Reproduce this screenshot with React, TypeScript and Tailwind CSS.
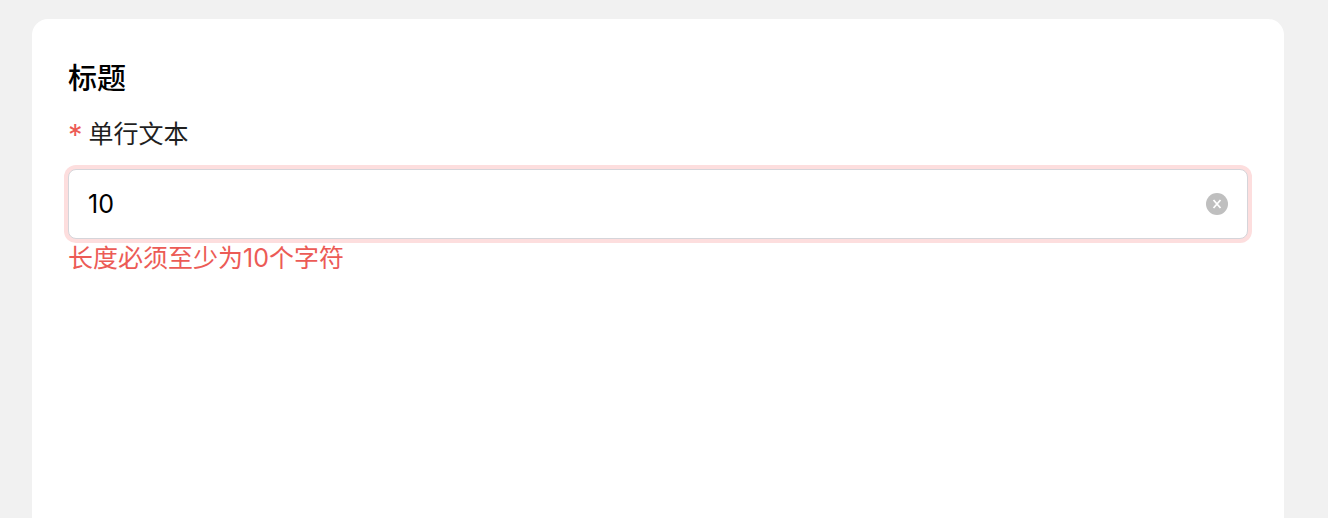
import React, { useState } from 'react';

const MIN_LENGTH = 10;

export default function App() {
  const [value, setValue] = useState('10');

  const invalid = value.length < MIN_LENGTH;

  return (
    <div className="flex min-h-screen flex-col bg-[#f1f1f1] pt-[19px] pr-11 pl-8 font-[Inter,'Noto_Sans_CJK_SC',sans-serif]">
      <main className="flex-1 rounded-t-2xl bg-white px-9 pt-10">
        <h1 className="text-[29px] leading-10 font-medium text-black">标题</h1>

        <div className="mt-3">
          <label htmlFor="single-line" className="flex gap-1.5 text-[25px] leading-[46px] text-[#1f1f1f]">
            <span className="text-[29px] leading-[48px] text-[#ec5b56]" aria-hidden="true">*</span>
            单行文本
          </label>

          <div
            className={`mt-2.5 flex h-[70px] items-center rounded-lg border bg-white px-[19px] ${
              invalid ? 'border-[#d5d5da] ring-4 ring-[#fddede]' : 'border-gray-300'
            }`}
          >
            <input
              id="single-line"
              type="text"
              value={value}
              onChange={(e) => setValue(e.target.value)}
              aria-invalid={invalid}
              aria-describedby="single-line-error"
              className="min-w-0 flex-1 bg-transparent text-[25px] leading-8 text-black outline-none"
            />
            <button type="button" aria-label="清除" onClick={() => setValue('')}>
              <svg className="size-[22px]" viewBox="0 0 22 22" fill="none">
                <circle cx="11" cy="11" r="11" fill="#bfbfbf" />
                <path d="M7.5 7l7 8M14.5 7l-7 8" stroke="white" strokeWidth="1.8" />
              </svg>
            </button>
          </div>

          {invalid && (
            <p id="single-line-error" role="alert" className="text-[25px] leading-[38px] text-[#ec5b56]">
              长度必须至少为10个字符
            </p>
          )}
        </div>
      </main>
    </div>
  );
}
